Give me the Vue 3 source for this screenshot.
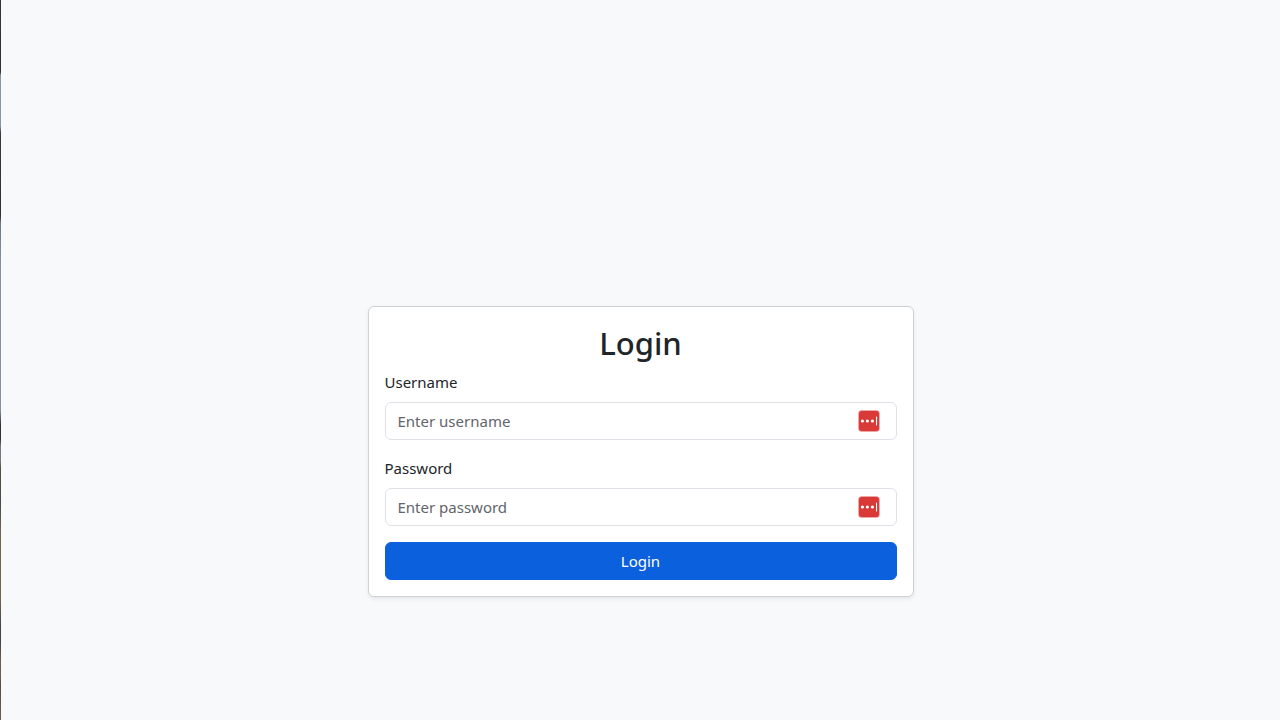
<script setup>
import { reactive } from 'vue'

const form = reactive({ username: '', password: '' })
const fields = [
  { id: 'username', label: 'Username', type: 'text', placeholder: 'Enter username' },
  { id: 'password', label: 'Password', type: 'password', placeholder: 'Enter password' },
]
</script>

<template>
  <div class="page">
    <div class="edge" aria-hidden="true"></div>
    <main class="content">
      <form class="card" @submit.prevent>
        <h2 class="title">Login</h2>
        <div v-for="field in fields" :key="field.id" class="group">
          <label class="label" :for="field.id">{{ field.label }}</label>
          <div class="control">
            <input
              :id="field.id"
              v-model="form[field.id]"
              class="input"
              :type="field.type"
              :placeholder="field.placeholder"
            />
            <svg class="badge" viewBox="0 0 22 22" aria-hidden="true">
              <rect x="0.3" y="0.3" width="21.4" height="21.4" rx="3.5" fill="#d93a37" opacity="0.6" />
              <rect x="1" y="1" width="20" height="20" rx="3" fill="#d93a37" />
              <g fill="#fff">
                <circle cx="4.4" cy="11" r="1.6" />
                <circle cx="9.4" cy="11" r="1.6" />
                <circle cx="14.4" cy="11" r="1.6" />
                <rect x="18" y="6.6" width="1.1" height="8.8" rx="0.5" />
              </g>
            </svg>
          </div>
        </div>
        <button class="submit" type="submit">Login</button>
      </form>
    </main>
  </div>
</template>

<style>
body {
  margin: 0;
  background: #f8f9fb;
}
</style>

<style scoped>
.page {
  display: flex;
  min-height: 100vh;
  background: #f8f9fb;
  color: #212529;
  font-family: "Segoe UI", "Noto Sans", "Open Sans", sans-serif;
  font-size: 15px;
  line-height: 24px;
}

.edge {
  flex: none;
  width: 1px;
  background: linear-gradient(
    #35363a 0%, #303135 10%, #8796a5 10.5%, #8796a5 17.5%, #38393c 18.5%, #303134 30%,
    #6b7885 31%, #84909e 36%, #84909e 57%, #303033 59%, #333335 61%, #77777d 62%,
    #77777d 64%, #55503f 65%, #484c46 70%, #77644f 74%, #77644f 83%, #454444 87%,
    #454444 89%, #735c4e 92%, #735c4e 94%, #5e4a45 95%, #705a50 100%
  );
}

.content {
  flex: 1;
  display: flex;
  align-items: center;
  justify-content: center;
  box-sizing: border-box;
  padding: 183px 16px 0;
}

.card {
  box-sizing: border-box;
  width: 100%;
  max-width: 546px;
  padding: 16px;
  background: #fff;
  border: 1px solid #d0d1d2;
  border-radius: 6px;
  box-shadow: 0 2px 4px rgba(0, 0, 0, 0.075);
}

.title {
  margin: 0 0 6px;
  font-size: 31px;
  font-weight: 500;
  line-height: 41px;
  text-align: center;
}

.group {
  margin-bottom: 16px;
}

.label {
  display: block;
  margin-bottom: 8px;
}

.control {
  position: relative;
}

.input {
  display: block;
  box-sizing: border-box;
  width: 100%;
  padding: 6px 44px 6px 12px;
  border: 1px solid #dee2e6;
  border-radius: 6px;
  background: #fff;
  color: #212529;
  font: inherit;
}

.input::placeholder {
  color: #5f656b;
  opacity: 1;
}

.badge {
  position: absolute;
  top: 8px;
  right: 17px;
  width: 22px;
  height: 22px;
}

.submit {
  display: block;
  width: 100%;
  padding: 6px 12px;
  border: 1px solid #0b60de;
  border-radius: 6px;
  background: #0b60de;
  color: #fff;
  font: inherit;
  cursor: pointer;
}
</style>
